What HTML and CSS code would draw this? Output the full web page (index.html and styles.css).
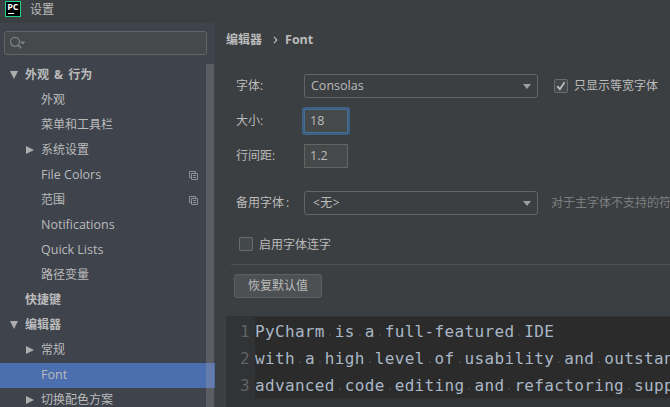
FILE: index.html
```html
<!DOCTYPE html>
<html lang="zh-CN">
<head>
<meta charset="utf-8">
<title>设置</title>
<link rel="stylesheet" href="styles.css">
</head>
<body>
<header class="titlebar">
  <svg class="logo" width="16" height="16" viewBox="0 0 16 16"><rect x=".5" y=".5" width="15" height="15" fill="#000" stroke="#21d789"/><text class="logo-text" x="2.2" y="9" textLength="11.4" lengthAdjust="spacingAndGlyphs">PC</text><path d="M3 12.5h6" stroke="#fff"/></svg>
  <span>设置</span>
</header>
<div class="window">
  <aside class="sidebar">
    <div class="search">
      <svg width="18" height="14" viewBox="0 0 18 14"><circle cx="6" cy="5.8" r="4.5" fill="none" stroke="#7b8388" stroke-width="1.3"/><path d="M9.2 9l3 3.2" stroke="#7b8388" stroke-width="1.6"/><path d="M11 5.5h5.4l-2.7 3z" fill="#7b8388"/></svg>
    </div>
    <nav class="tree">
      <div class="row group"><i class="down"></i><span class="spaced">外观 &amp; 行为</span></div>
      <div class="row leaf">外观</div>
      <div class="row leaf">菜单和工具栏</div>
      <div class="row sub"><i class="right"></i>系统设置</div>
      <div class="row leaf"><span class="latin">File Colors</span><svg class="copy" width="9" height="9" viewBox="0 0 9 9"><path d="M2 6.5H.5v-6h6V2M2.5 2.5h6v6h-6zM4 4.5h3M4 6.5h3"/></svg></div>
      <div class="row leaf">范围<svg class="copy" width="9" height="9" viewBox="0 0 9 9"><path d="M2 6.5H.5v-6h6V2M2.5 2.5h6v6h-6zM4 4.5h3M4 6.5h3"/></svg></div>
      <div class="row leaf"><span class="latin">Notifications</span></div>
      <div class="row leaf"><span class="latin">Quick Lists</span></div>
      <div class="row leaf">路径变量</div>
      <div class="row group plain">快捷键</div>
      <div class="row group"><i class="down"></i>编辑器</div>
      <div class="row sub"><i class="right"></i>常规</div>
      <div class="row leaf selected"><span class="latin">Font</span></div>
      <div class="row sub"><i class="right"></i>切换配色方案</div>
      <div class="scrollbar"></div>
    </nav>
  </aside>
  <main class="content">
    <div class="crumbs"><span>编辑器</span><svg width="5" height="8" viewBox="0 0 5 8"><path d="M1 .8L3.8 4 1 7.2" fill="none" stroke="#bbb" stroke-width="1.2"/></svg><span class="crumb-font">Font</span></div>
    <div class="field font-field"><label>字体:</label><div class="combo"><span class="latin">Consolas</span><i class="arrow"></i></div><div class="box mono-box"><svg width="12" height="12" viewBox="0 0 12 12"><path d="M2.3 6.2l2.5 3 4.8-7" fill="none" stroke="#bbb" stroke-width="1.9"/></svg></div><span>只显示等宽字体</span></div>
    <div class="field"><label>大小:</label><div class="input focused">18</div></div>
    <div class="field"><label>行间距:</label><div class="input">1.2</div></div>
    <div class="field fallback"><label>备用字体<span class="colon">:</span></label><div class="combo"><span class="none">&lt;无&gt;</span><i class="arrow"></i></div><span class="hint">对于主字体不支持的符</span></div>
    <div class="ligatures"><div class="box"></div><span>启用字体连字</span></div>
    <hr>
    <button class="reset">恢复默认值</button>
    <div class="editor">
      <div class="line"><b>1</b><code>PyCharm<s> </s>is<s> </s>a<s> </s>full-featured<s> </s>IDE</code></div>
      <div class="line"><b>2</b><code>with<s> </s>a<s> </s>high<s> </s>level<s> </s>of<s> </s>usability<s> </s>and<s> </s>outstan</code></div>
      <div class="line"><b>3</b><code>advanced<s> </s>code<s> </s>editing<s> </s>and<s> </s>refactoring<s> </s>supp</code></div>
    </div>
  </main>
</div>
</body>
</html>
```
FILE: styles.css
```css
* { box-sizing: border-box; }
body {
  margin: 0;
  width: 670px;
  height: 407px;
  overflow: hidden;
  background: #3c3f41;
  color: #bbb;
  font: 12px/18px "Open Sans", "Noto Sans CJK SC", sans-serif;
  white-space: nowrap;
}
.titlebar { display: flex; height: 23px; padding: 1px 0 0 5px; gap: 9px; }
.titlebar span { line-height: 17px; }
.logo-text { font: bold 8.5px "Open Sans", sans-serif; fill: #fff; }
.window { display: flex; height: 384px; }
.sidebar { width: 215px; flex: none; padding-top: 8px; background: #3e434c; }
.search {
  display: flex;
  align-items: center;
  width: 203px;
  height: 24px;
  margin-left: 4px;
  padding-left: 4px;
  border: 1px solid #646464;
  border-radius: 3px;
  background: #45494a;
}
.tree { position: relative; margin-top: 8px; height: 344px; overflow: hidden; }
.row { display: flex; align-items: center; height: 25px; padding-bottom: 1px; }
.group { padding-left: 10px; gap: 6px; font-weight: bold; }
.group .down { margin-right: 1px; }
.spaced { word-spacing: 2px; }
.plain { padding-left: 25px; }
.leaf { padding-left: 41px; }
.sub { padding-left: 26px; gap: 7px; }
.selected { background: #4b6eaf; }
.down { border: solid transparent; border-width: 8px 4.5px 0; border-top-color: #adadad; }
.right { border: solid transparent; border-width: 4.5px 0 4.5px 8px; border-left-color: #adadad; }
.latin { font-size: 12.5px; }
.copy { margin: 0 17px 0 auto; fill: none; stroke: #87939a; }
.scrollbar { position: absolute; top: 1px; right: 1px; width: 8px; height: 343px; background: rgba(166, 166, 166, .28); }
.content { flex: 1; min-width: 0; overflow: hidden; padding-left: 11px; }
.crumbs { display: flex; align-items: center; height: 18px; margin-top: 8px; gap: 10px; font-weight: bold; }
.crumb-font { font-size: 12.5px; margin-left: -3px; }
.crumbs svg { margin-left: 1px; }
.field { display: flex; align-items: center; height: 24px; margin: 11px 0 0 10px; }
.font-field { margin-top: 25px; }
.fallback { margin-top: 23px; }
label { width: 68px; flex: none; }
.colon { margin-left: 2px; }
.combo {
  display: flex;
  justify-content: space-between;
  align-items: center;
  width: 234px;
  height: 24px;
  flex: none;
  padding: 0 6px;
  border: 1px solid #646464;
  border-radius: 3px;
}
.arrow { border: solid transparent; border-width: 5px 4.5px 0; border-top-color: #9da0a2; }
.box {
  width: 14px;
  height: 14px;
  flex: none;
  border: 1px solid #6b6b6b;
  border-radius: 2px;
  background: #43494a;
}
.box svg { display: block; }
.mono-box { margin: 0 6px 0 16px; }
.input { width: 44px; height: 24px; padding-left: 5px; border: 1px solid #646464; background: #45494a; font-size: 12.5px; line-height: 22px; }
.focused { border-color: #466d94; box-shadow: 0 0 0 2px #3d6185; border-radius: 1px; }
.none { margin-left: 2px; letter-spacing: .5px; }
.hint { margin-left: 13px; color: #7c7e80; }
.ligatures { display: flex; align-items: center; gap: 6px; height: 18px; margin: 20px 0 0 13px; }
.ligatures span { padding-top: 1px; }
hr { height: 1px; margin: 11px 0 0 5px; border: 0; background: #515151; }
.reset {
  display: block;
  width: 88px;
  height: 24px;
  margin: 9px 0 0 8px;
  padding: 0;
  border: 1px solid #5e6060;
  border-radius: 3px;
  background: #4c5052;
  color: #bbb;
  font: inherit;
}
.editor { height: 100px; margin-top: 18px; padding-top: 1px; background: #313335; }
.line { display: flex; height: 27px; font: 16px/29px "DejaVu Sans Mono", monospace; letter-spacing: .34px; }
.line b { width: 29px; flex: none; padding-right: 5px; text-align: right; font-weight: normal; color: #606366; }
.line code { flex: 1; min-width: 0; overflow: hidden; font: inherit; color: #a9b7c6; background: #2b2b2b; white-space: pre; }
s { text-decoration: none; background: radial-gradient(circle at 5px 13px, #484848 .6px, transparent .9px); }
```
